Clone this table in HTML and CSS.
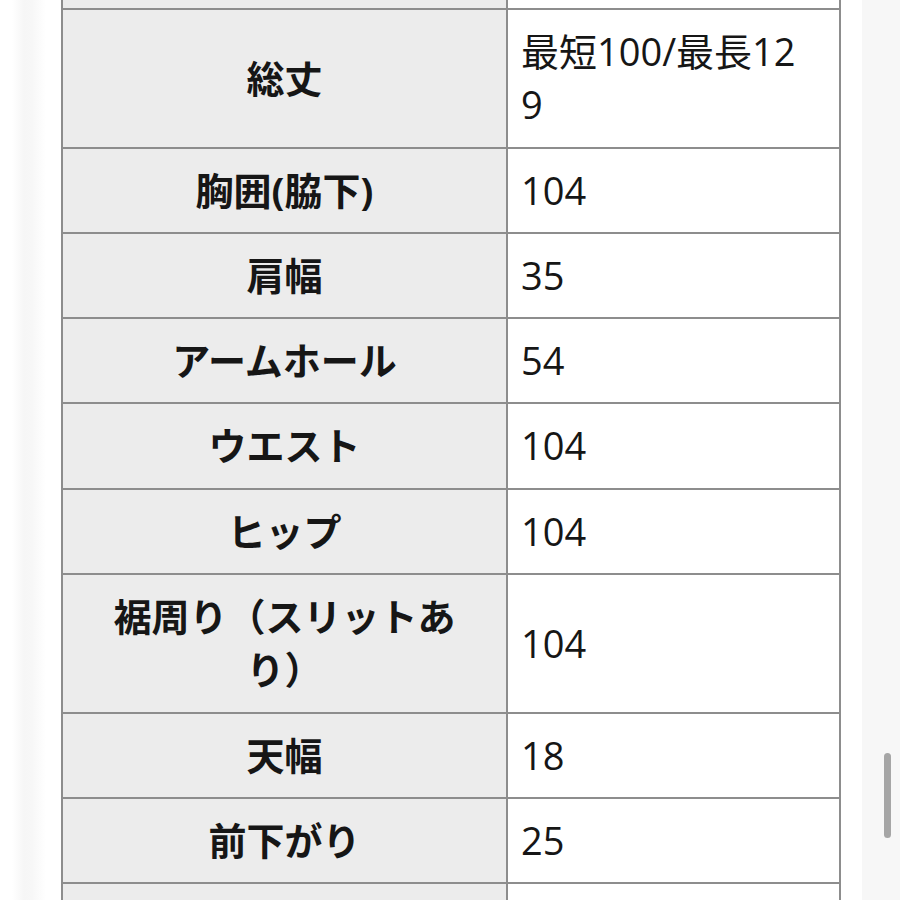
FILE: index.html
```html
<!DOCTYPE html>
<html lang="ja">
<head>
<meta charset="utf-8">
<title>サイズ表</title>
<link rel="stylesheet" href="styles.css">
</head>
<body>
<div class="page">
  <div class="gutter-left"></div>
  <table class="sizes">
    <colgroup><col class="c-label"><col class="c-value"></colgroup>
    <tbody>
      <tr class="stub"><th></th><td></td></tr>
      <tr><th>総丈</th><td>最短100/最長129</td></tr>
      <tr><th>胸囲(脇下)</th><td>104</td></tr>
      <tr><th>肩幅</th><td>35</td></tr>
      <tr><th>アームホール</th><td>54</td></tr>
      <tr><th>ウエスト</th><td>104</td></tr>
      <tr><th>ヒップ</th><td>104</td></tr>
      <tr><th>裾周り（スリットあり）</th><td>104</td></tr>
      <tr><th>天幅</th><td>18</td></tr>
      <tr><th>前下がり</th><td>25</td></tr>
      <tr><th>&nbsp;</th><td>&nbsp;</td></tr>
    </tbody>
  </table>
  <div class="gutter-right"><div class="track"></div></div>
  <div class="thumb"></div>
</div>
</body>
</html>
```
FILE: styles.css
```css
html, body {
  margin: 0;
  padding: 0;
  background: #ffffff;
}
.page {
  position: relative;
  display: flex;
  width: 900px;
  height: 900px;
  overflow: hidden;
  font-family: "Open Sans", "Noto Sans CJK JP", sans-serif;
  color: #161616;
}
.gutter-left {
  flex: 0 0 61px;
  background: linear-gradient(to right, #ffffff 0, #ffffff 12px, #f6f6f6 24px, #f7f7f7 32px, #ffffff 46px, #ffffff 61px);
}
.sizes {
  flex: 0 0 778px;
  width: 778px;
  table-layout: fixed;
  border-collapse: collapse;
  align-self: flex-start;
}
.c-label { width: 445px; }
.c-value { width: 333px; }
.sizes th,
.sizes td {
  border: 2px solid #8d8d8d;
  font-size: 38px;
  line-height: 53.3px;
  padding: 15px 15px;
  vertical-align: middle;
}
.sizes th {
  background: #ececec;
  font-weight: 700;
  text-align: center;
  padding-left: 34px;
  padding-right: 34px;
}
.sizes td {
  background: #ffffff;
  font-weight: 400;
  text-align: left;
  word-break: break-all;
  padding-left: 13px;
  padding-right: 28px;
}
.sizes .stub th,
.sizes .stub td {
  border-top: 0;
  height: 8px;
  padding: 0;
  line-height: 8px;
}
.gutter-right {
  flex: 1 1 auto;
  display: flex;
  justify-content: flex-end;
  background: #ffffff;
}
.track {
  width: 38px;
  height: 100%;
  background: #f7f7f7;
}
.thumb {
  position: absolute;
  left: 884px;
  top: 753px;
  width: 7px;
  height: 85px;
  border-radius: 4px;
  background: #a6a6a6;
}
```
